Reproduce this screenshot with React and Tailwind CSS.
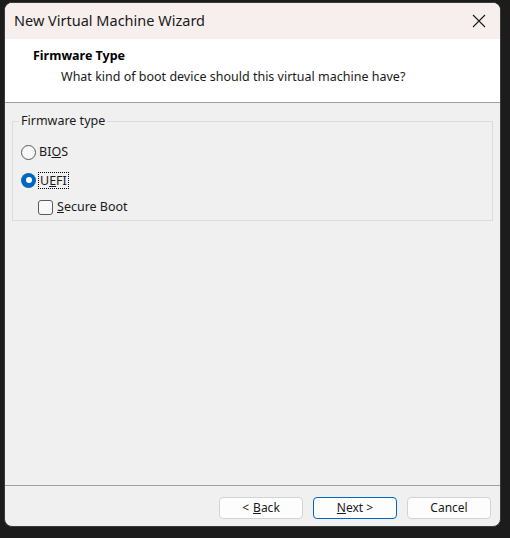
import React, { useState } from "react";

const font = { fontFamily: '"Noto Sans", "Open Sans", sans-serif' };

const WizardButton = ({ children, primary }) => (
  <button
    className={`w-[84px] h-[22px] rounded-[4px] bg-[#fdfdfd] text-[12px] text-[#1a1a1a] flex items-center justify-center border ${
      primary ? "border-[#0067c0]" : "border-[#d4d4d4]"
    }`}
  >
    {children}
  </button>
);

const App = () => {
  const [firmware, setFirmware] = useState("uefi");
  const [secure, setSecure] = useState(false);

  return (
    <div className="w-[510px] h-[538px] bg-[#1c1c1c] pt-[2px] pl-[4px]" style={font}>
      <div className="w-[497px] h-[525px] bg-[#f0f0f0] rounded-[8px] overflow-hidden flex flex-col border border-[#3a3a3a]">
        {/* Title bar */}
        <div className="h-[36px] bg-[#f7efed] flex items-center justify-between pl-[9px] pr-[12px] shrink-0">
          <span className="text-[14.5px] text-[#1a1a1a]">New Virtual Machine Wizard</span>
          <svg width="14" height="14" viewBox="0 0 14 14" className="mr-[2px]">
            <path d="M1 1 L13 13 M13 1 L1 13" stroke="#1a1a1a" strokeWidth="1.1" />
          </svg>
        </div>

        {/* Header */}
        <div className="h-[64px] bg-white border-b border-[#a0a0a0] shrink-0 pl-[28px] pt-[8px]">
          <div className="text-[12.5px] font-bold text-black leading-[18px]">Firmware Type</div>
          <div className="text-[12.5px] text-[#1a1a1a] leading-[18px] mt-[3px] pl-[28px]">
            What kind of boot device should this virtual machine have?
          </div>
        </div>

        {/* Body */}
        <div className="flex-1 px-[7px] pt-[18px]">
          <div className="relative border border-[#dcdcdc] h-[100px] pt-[20px] pl-[8px]">
            <span className="absolute -top-[9px] left-[6px] bg-[#f0f0f0] px-[2px] text-[12.5px] text-[#1a1a1a] leading-[16px]">
              Firmware type
            </span>

            <label className="flex items-center h-[20px] cursor-default" onClick={() => setFirmware("bios")}>
              <span
                className={`w-[15px] h-[15px] rounded-full flex items-center justify-center ${
                  firmware === "bios" ? "bg-[#0067c0]" : "border border-[#5a5a5a] bg-[#f8f8f8]"
                }`}
              >
                {firmware === "bios" && <span className="w-[6px] h-[6px] rounded-full bg-white" />}
              </span>
              <span className="ml-[3px] text-[12.5px] text-[#1a1a1a]">
                BI<span className="underline">O</span>S
              </span>
            </label>

            <label className="flex items-center h-[20px] mt-[8px] cursor-default" onClick={() => setFirmware("uefi")}>
              <span
                className={`w-[15px] h-[15px] rounded-full flex items-center justify-center ${
                  firmware === "uefi" ? "bg-[#0067c0]" : "border border-[#5a5a5a] bg-[#f8f8f8]"
                }`}
              >
                {firmware === "uefi" && <span className="w-[6px] h-[6px] rounded-full bg-white" />}
              </span>
              <span className="ml-[3px] text-[12.5px] text-[#1a1a1a] outline outline-1 outline-dotted outline-black px-[1px] leading-[15px]">
                U<span className="underline">E</span>FI
              </span>
            </label>

            <label className="flex items-center h-[20px] mt-[7px] ml-[17px] cursor-default" onClick={() => setSecure(!secure)}>
              <span
                className={`w-[15px] h-[15px] rounded-[3px] border ${
                  secure ? "bg-[#0067c0] border-[#0067c0]" : "border-[#5a5a5a] bg-[#f8f8f8]"
                }`}
              />
              <span className="ml-[4px] text-[12.5px] text-[#1a1a1a]">
                <span className="underline">S</span>ecure Boot
              </span>
            </label>
          </div>
        </div>

        {/* Footer */}
        <div className="h-[41px] border-t border-[#a0a0a0] shrink-0 flex items-start justify-end gap-[10px] pr-[9px] pt-[11px]">
          <WizardButton>
            &lt; <span className="underline ml-[4px]">B</span>ack
          </WizardButton>
          <WizardButton primary>
            <span className="underline">N</span>ext &gt;
          </WizardButton>
          <WizardButton>Cancel</WizardButton>
        </div>
      </div>
    </div>
  );
};

export default App;
